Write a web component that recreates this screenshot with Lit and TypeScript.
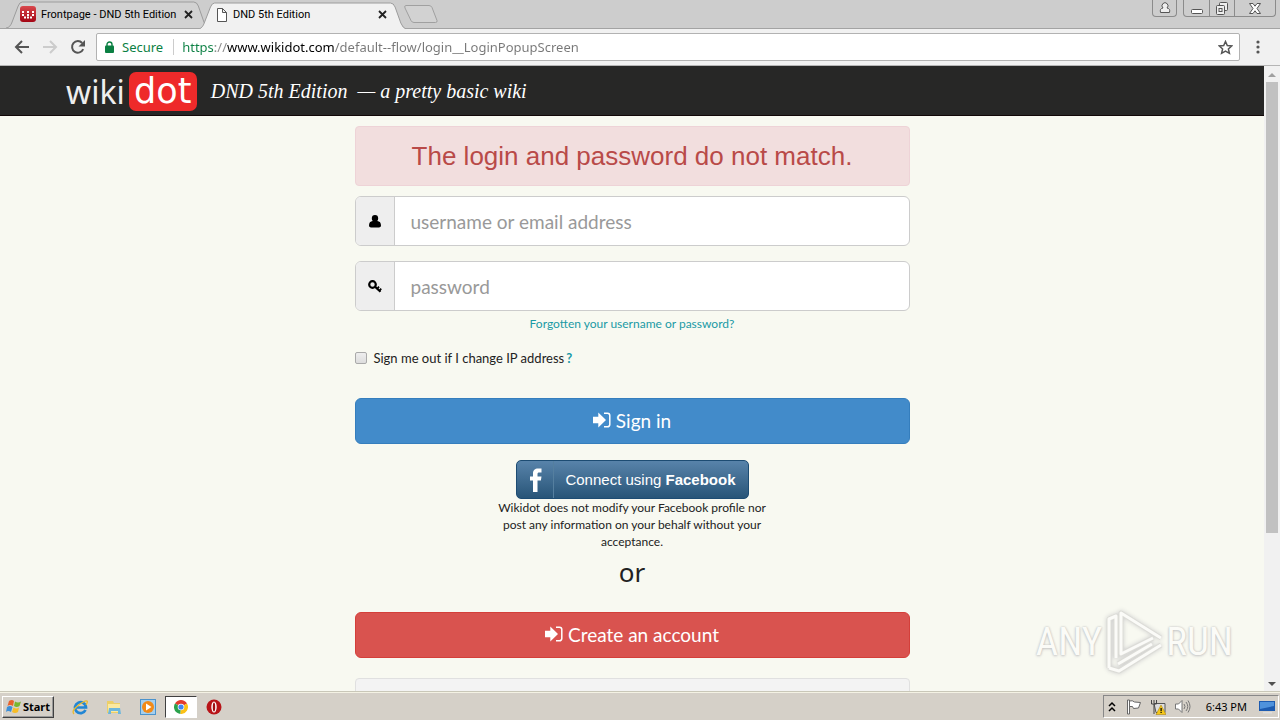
import { LitElement, html, css, svg } from "lit";
import { customElement } from "lit/decorators.js";

const backIcon = svg`<svg width="16" height="16" viewBox="0 0 16 16" fill="none" stroke="#555" stroke-width="2"><path d="M15 8H2M8 2 2 8l6 6"/></svg>`;
const forwardIcon = svg`<svg width="16" height="16" viewBox="0 0 16 16" fill="none" stroke="#ccc" stroke-width="2"><path d="M1 8h13M8 2l6 6-6 6"/></svg>`;
const reloadIcon = svg`<svg width="16" height="16" viewBox="0 0 16 16"><path d="M13.2 10.2A5.8 5.8 0 1 1 12.2 4" fill="none" stroke="#555" stroke-width="2"/><path d="M15 1v6.500H8.500z" fill="#555"/></svg>`;
const lockIcon = svg`<svg width="9" height="12" viewBox="0 0 9 12"><path d="M2 6V3.500a2.500 2.500 0 0 1 5 0V6" fill="none" stroke="#0b8043" stroke-width="1.400"/><rect y="4.500" width="9" height="7.500" rx="1" fill="#0b8043"/></svg>`;
const starIcon = svg`<svg width="15" height="15" viewBox="0 0 15 15" fill="none" stroke="#555" stroke-width="1.500"><path d="m7.500 1.500 1.800 4.100 4.400.4-3.300 2.900 1 4.400-3.900-2.300-3.900 2.300 1-4.400L1.300 6l4.400-.4z"/></svg>`;
const dotsIcon = svg`<svg width="4" height="14" viewBox="0 0 4 14" fill="#555"><circle cx="2" cy="2" r="1.600"/><circle cx="2" cy="7" r="1.600"/><circle cx="2" cy="12" r="1.600"/></svg>`;
const crossIcon = svg`<svg width="9" height="9" viewBox="0 0 9 9" stroke="#222" stroke-width="1.800"><path d="m1 1 7 7M8 1 1 8"/></svg>`;
const pageIcon = svg`<svg width="12" height="14" viewBox="0 0 12 14" fill="#fff" stroke="#555"><path d="M1.500.5h5l4 4v9h-9zM6.500.5v4h4"/></svg>`;
const wikiIcon = svg`<svg width="16" height="16" viewBox="0 0 16 16"><defs><linearGradient id="w" x2="0" y2="1"><stop stop-color="#d9484d"/><stop offset="1" stop-color="#a30514"/></linearGradient></defs><rect width="16" height="16" rx="3" fill="url(#w)"/><g fill="#fff"><path d="M2 5h2v2H2zM7 5h2v2H7zM12 5h2v2h-2zM2 8h2v2H2zM7 8h2v2H7zM12 8h2v2h-2zM4 10.500h2v2H4zM7 10.500h2v2H7zM10 10.500h2v2h-2z"/></g></svg>`;
const userIcon = svg`<svg width="12" height="13" viewBox="0 0 12 13"><path d="M6 0a3.300 3.300 0 0 1 3.200 3.300c0 1-.3 2-.9 2.700C10.800 6.300 12 7.700 12 10.500c0 1.300-.9 2-2 2H2c-1.100 0-2-.7-2-2C0 7.700 1.200 6.300 3.700 6a4 4 0 0 1-.9-2.700A3.300 3.300 0 0 1 6 0z"/></svg>`;
const keyIcon = svg`<svg width="14" height="13" viewBox="0 0 14 13" fill="none" stroke="#000"><circle cx="4.500" cy="4.500" r="3.300" stroke-width="2.200"/><path d="m6.800 6.500 5.700 5.300" stroke-width="2.200"/><path d="m9 9 2-2.300M11.200 11l2-2.300" stroke-width="1.800"/></svg>`;
const signIcon = svg`<svg width="18" height="16" viewBox="0 0 18 16" fill="#fff"><path d="M0 4.700h5.300V.5L13 8l-7.700 7.500v-4.200H0z"/><path d="M11 1.200h3.500a2.300 2.300 0 0 1 2.300 2.300v9a2.300 2.300 0 0 1-2.300 2.300H11" fill="none" stroke="#fff" stroke-width="1.500"/></svg>`;
const fbIcon = svg`<svg width="14" height="26" viewBox="0 0 14 26"><path d="M4 25V13.500H1V9.500h3V6.500C4 3 6 1.500 9 1.500h3.500v4H10c-1 0-1.500.5-1.500 1.500v2.500h4l-.6 4H8.500V25z" fill="#fff"/></svg>`;

const tabShape = (fill: string) => svg`<svg class="shape" viewBox="0 0 200 27" preserveAspectRatio="none"><path d="M0 27C3 27 5 24 6 21L12 5q1.500-4 4-4H185q3 0 4.500 4L195 21q2 5 5 6" fill="${fill}" stroke="#9c9c9c" vector-effect="non-scaling-stroke"/></svg>`;

@customElement("app-root")
export class AppRoot extends LitElement {
  static styles = css`
    :host { display: flex; flex-direction: column; height: 100vh; overflow: hidden; position: relative; background: #f8f9f1; font-family: Lato, Carlito, sans-serif; color: #222; }
    * { box-sizing: border-box; }
    svg { display: block; flex: none; }
    button { font: inherit; color: inherit; padding: 0; margin: 0; border: 0; background: none; display: flex; align-items: center; justify-content: center; }
    a { text-decoration: none; color: #1a9aa5; }

    .tabs { height: 29px; flex: none; display: flex; align-items: flex-end; padding-left: 6px; background: #cdcdcd; border-bottom: 1px solid #a3a3a3; font: 11px Roboto, sans-serif; color: #000; }
    .tab { position: relative; width: 203px; height: 28px; display: flex; align-items: center; padding: 0 16px 0 14px; }
    .tab.active { width: 208px; margin: 0 0 -1px -11px; padding: 0 19px 1px 18px; }
    .shape { position: absolute; inset: 1px 0 0 0; width: 100%; height: 27px; }
    .tab > button { position: relative; }
    .pick { flex: 1; min-width: 0; justify-content: flex-start; gap: 5px; white-space: nowrap; }
    .new { align-self: center; margin-left: -3px; }
    .spacer { flex: 1; }
    .win { display: flex; height: 17px; align-self: flex-start; border: 1px solid #8b8b8b; border-top: 0; border-radius: 0 0 4px 4px; }
    .win button { width: 25px; height: 16px; }
    .win button + button { border-left: 1px solid #8b8b8b; }
    .win .wide { width: 41px; }
    .win.account { margin-right: 6px; }
    .account button { width: 23px; }
    .win:last-child { margin-right: 4px; }

    .toolbar { height: 37px; flex: none; display: flex; align-items: center; padding: 0 20px 0 14px; gap: 12px; background: #f1f1f1; border-bottom: 1px solid #b5b5b5; }
    .omni { flex: 1; height: 28px; display: flex; align-items: center; margin: 0 4px 0 -2px; padding: 0 6px 0 8px; background: #fff; border: 1px solid #b2b2b2; border-radius: 2px; }
    .secure { color: #0b8043; margin: 0 10px 0 8px; font: 13px "Noto Sans", sans-serif; }
    .url { flex: 1; min-width: 0; border: 0; border-left: 1px solid #ccc; padding: 0 0 0 8px; outline: 0; height: 16px; font: 13px "Noto Sans", sans-serif; background: linear-gradient(90deg, #0b8043 41px, #888 41px 53px, #000 53px 160px, #777 160px); -webkit-background-clip: text; background-clip: text; -webkit-text-fill-color: transparent; }

    .body { flex: 1; min-height: 0; display: flex; }
    .page { flex: 1; min-width: 0; overflow: hidden; }
    .head { height: 50px; display: flex; align-items: center; padding: 1px 0 0 66px; background: #272726; border-bottom: 1px solid #120808; color: #fff; }
    .logo { display: flex; align-items: center; gap: 4px; font: 32px/39px "Noto Sans", sans-serif; color: #eee; }
    .dot { height: 39px; width: 68px; text-align: center; border-radius: 7px; background: #ee2a2a; color: #fff; font: 35px/39px "DejaVu Sans", sans-serif; }
    .title { margin-left: 14px; white-space: pre; font: italic 20px "Liberation Serif", serif; }

    .form { width: 555px; max-width: 100%; margin: 10px auto 0; display: flex; flex-direction: column; }
    .alert { height: 60px; display: flex; align-items: center; justify-content: center; background: #f2dede; border: 1px solid #eed3d7; border-radius: 4px; color: #b94a48; font: 26px "Liberation Sans", sans-serif; margin-bottom: 10px; }
    .field { display: flex; height: 50px; border: 1px solid #ccc; border-radius: 6px; background: #fff; overflow: hidden; margin-bottom: 15px; }
    .field.pw { margin-bottom: 4px; }
    .field label { width: 39px; display: flex; align-items: center; justify-content: center; background: #eee; border-right: 1px solid #ccc; }
    .field input { flex: 1; min-width: 0; border: 0; outline: 0; background: none; padding: 0 16px; font: 19px Lato, sans-serif; }
    .field input::placeholder { color: #999; }
    .forgot { text-align: center; font-size: 12px; line-height: 18px; margin-bottom: 16px; }
    .check { display: flex; align-items: center; height: 18px; font-size: 13px; margin-bottom: 31px; }
    .check input { appearance: none; width: 12px; height: 12px; margin: 0 7px 0 0; border: 1px solid #aaa; border-radius: 2px; background: linear-gradient(#eee, #ddd); }
    .check a { font-weight: bold; margin-left: 2px; }
    .btn { height: 46px; gap: 5px; padding-bottom: 2px; border: 1px solid #357ebd; border-radius: 6px; background: #428bca; color: #fff; font-size: 19px; }
    .btn.red { background: #d9534f; border-color: #d43f3a; }
    .fb { align-self: center; width: 233px; height: 39px; margin-top: 16px; border: 1px solid #1d4c73; border-radius: 5px; background: linear-gradient(#5883aa, #285578); color: #fff; font: 15px "Liberation Sans", sans-serif; }
    .fbmark { width: 37px; height: 37px; display: flex; align-items: center; justify-content: center; border-right: 1px solid #557f9f; padding-left: 2px; }
    .fbtext { flex: 1; }
    .note { align-self: center; width: 290px; margin: 0; text-align: center; font-size: 12px; line-height: 17px; }
    .or { text-align: center; font: 26px/30px "Noto Sans", sans-serif; margin: 7px 0 25px; }
    .panel { height: 60px; margin-top: 20px; background: #f3f3f3; border: 1px solid #e0e0e0; border-radius: 4px; }

    .scroll { width: 16px; background: #f1f1f1; display: flex; flex-direction: column; align-items: center; }
    .scroll svg { margin: 7px 0 6px; }
    .thumb { width: 12px; height: 72%; margin-top: -1px; background: #c1c1c1; }

    .task { height: 28px; flex: none; display: flex; align-items: center; background: #d5d0c8; border-top: 1px solid #f4f2e4; box-shadow: 0 -1px #c9c7b8; padding: 0 1px 0 2px; font: 11px "Noto Sans", sans-serif; color: #000; }
    .start { width: 52px; height: 22px; gap: 1px; font-weight: bold; border: 1px solid; border-color: #fff #404040 #404040 #fff; box-shadow: inset -1px -1px #999; }
    .quick { display: flex; margin-left: 9px; }
    .quick button { width: 34px; height: 22px; }
    .quick .on { width: 32px; background: #fff; border: 1px solid; border-color: #404040 #fff #fff #404040; }
    .tray { display: flex; align-items: center; gap: 8px; height: 23px; padding: 0 3px; border: 1px solid; border-color: #888 #fff #fff #888; }
    .clock { margin: 0 4px 0 7px; }

    .mark { position: absolute; right: 47px; bottom: 46px; display: flex; align-items: center; gap: 2px; font: 39px/64px "Liberation Sans Narrow", "Roboto Condensed", sans-serif; color: #fbfbf7; text-shadow: 0 0 2px #bbb, 0 1px 3px #ccc; pointer-events: none; }
    .mark svg { filter: drop-shadow(0 0 2px #ccc); }
  `;

  render() {
    return html`
      <nav class="tabs" aria-label="Tabs">
        <div class="tab">${tabShape("#d2d2d2")}<button class="pick">${wikiIcon}<span>Frontpage - DND 5th Edition</span></button><button aria-label="Close tab">${crossIcon}</button></div>
        <div class="tab active">${tabShape("#f1f1f1")}<button class="pick">${pageIcon}<span>DND 5th Edition</span></button><button aria-label="Close tab">${crossIcon}</button></div>
        <button class="new" aria-label="New tab"><svg width="36" height="18" viewBox="0 0 36 18"><path d="M3 .5h23q2 0 3 2l5 13q.5 2-1.500 2H11q-2 0-3-2L2 3Q1 .5 3 .5z" fill="#d2d2d2" stroke="#a0a0a0"/></svg></button>
        <span class="spacer"></span>
        <div class="win account"><button aria-label="Account"><svg width="12" height="12" viewBox="0 0 12 12" fill="#eee" stroke="#555"><path d="M1.500 10.500q-1-4 2.500-4.500a3 3 0 1 1 4 0q3.500.5 2.500 4.500z"/></svg></button></div>
        <div class="win">
          <button aria-label="Minimize"><svg width="12" height="12" viewBox="0 0 12 12"><rect x=".5" y="7.500" width="11" height="4" rx="1" fill="#fff" stroke="#555"/></svg></button>
          <button aria-label="Restore"><svg width="14" height="13" viewBox="0 0 14 13" fill="#eee" stroke="#555"><rect x="4.500" y=".5" width="8" height="8" rx="1"/><rect x="1.500" y="3.500" width="8" height="9" rx="1"/><rect x="4" y="6.500" width="3" height="3"/></svg></button>
          <button class="wide" aria-label="Close"><svg width="12" height="11" viewBox="0 0 12 11"><path d="M.5.500H4l2 2.700L8 .5h3.500L8 5.500l3.500 5H8L6 7.800l-2 2.700H.5l3.500-5z" fill="#fff" stroke="#555"/></svg></button>
        </div>
      </nav>
      <div class="toolbar">
        <button aria-label="Back">${backIcon}</button><button aria-label="Forward">${forwardIcon}</button><button aria-label="Reload">${reloadIcon}</button>
        <div class="omni">${lockIcon}<span class="secure">Secure</span>
          <input class="url" aria-label="Address" .value=${"https://www.wikidot.com/default--flow/login__LoginPopupScreen"} />
          <button aria-label="Bookmark">${starIcon}</button></div>
        <button aria-label="Menu">${dotsIcon}</button>
      </div>
      <div class="body">
        <main class="page">
          <header class="head"><div class="logo"><span>wiki</span><span class="dot">dot</span></div><span class="title">DND 5th Edition  — a pretty basic wiki</span></header>
          <form class="form">
            <div class="alert" role="alert">The login and password do not match.</div>
            <div class="field"><label for="user" aria-label="Username">${userIcon}</label><input id="user" placeholder="username or email address" /></div>
            <div class="field pw"><label for="pass" aria-label="Password">${keyIcon}</label><input id="pass" type="password" placeholder="password" /></div>
            <div class="forgot"><a href="#">Forgotten your username or password?</a></div>
            <div class="check"><input id="ip" type="checkbox" /><label for="ip">Sign me out if I change IP address</label><a href="#">?</a></div>
            <button class="btn" type="button">${signIcon}<span>Sign in</span></button>
            <button class="fb" type="button"><span class="fbmark">${fbIcon}</span><span class="fbtext">Connect using <b>Facebook</b></span></button>
            <p class="note">Wikidot does not modify your Facebook profile nor post any information on your behalf without your acceptance.</p>
            <div class="or">or</div>
            <button class="btn red" type="button">${signIcon}<span>Create an account</span></button>
            <div class="panel"></div>
          </form>
        </main>
        <div class="scroll"><svg width="8" height="4" viewBox="0 0 8 4"><path d="M0 4 4 0l4 4z" fill="#a0a0a0"/></svg><div class="thumb"></div><span class="spacer"></span><svg width="8" height="4" viewBox="0 0 8 4"><path d="m0 0 4 4 4-4z" fill="#505050"/></svg></div>
      </div>
      <footer class="task">
        <button class="start"><svg width="16" height="15" viewBox="0 0 16 15"><path d="M3 2q3-2 5 0L7 7Q4 5 1.500 7z" fill="#e8622c"/><path d="M9 2.500q3 2 6 0L13.500 7q-3 2-5.500 0z" fill="#79b62f"/><path d="M1 8q3-2 5.500 0L5 13q-3-2-5 0z" fill="#3d8fd8"/><path d="M7.500 8.500q3 2 5.500 0L12 13q-3 2-6 0z" fill="#f7bd27"/></svg>Start</button>
        <div class="quick">
          <button aria-label="Internet Explorer"><svg width="16" height="16" viewBox="0 0 16 16" fill="none"><path d="M13.500 11A5.500 5.500 0 1 1 14 8.500H4" stroke="#2286d4" stroke-width="2.700"/><path d="M2 15Q-1 12 6 6.500T15 2q1 1-1 4" stroke="#e9b92e" stroke-width="1.300"/></svg></button>
          <button aria-label="Explorer"><svg width="16" height="16" viewBox="0 0 16 16"><path d="M1 2h6l1 2h6v10H1z" fill="#eccf68"/><path d="M2 5h12v8H2z" fill="#fbe9a0"/><path d="M3 9h11l1 6h-3v-3H5v3H2z" fill="#6db7dc"/></svg></button>
          <button aria-label="Media Player"><svg width="16" height="16" viewBox="0 0 16 16"><rect x=".5" y=".5" width="15" height="15" fill="#a5cfee" stroke="#4b93cc"/><circle cx="8" cy="8" r="6" fill="#f28a18"/><path d="m6 4.500 5.500 3.500L6 11.500z" fill="#fff"/></svg></button>
          <button class="on" aria-label="Chrome"><svg width="14" height="14" viewBox="0 0 14 14"><path d="M7 7 1 3.400A7 7 0 0 1 13 3.500z" fill="#e33b2e"/><path d="M7 7 6.500 14A7 7 0 0 1 1 3.400z" fill="#2ba24c"/><path d="M7 7 13 3.500A7 7 0 0 1 6.500 14z" fill="#fbc116"/><circle cx="7" cy="7" r="3.300" fill="#fff"/><circle cx="7" cy="7" r="2.600" fill="#4285f4"/></svg></button>
          <button aria-label="Opera"><svg width="16" height="16" viewBox="0 0 16 16"><circle cx="8" cy="8" r="7.500" fill="#b81418"/><ellipse cx="8" cy="8" rx="2.700" ry="5.500" fill="#fff"/><ellipse cx="8" cy="8" rx="1.200" ry="4.500" fill="#a00f12"/></svg></button>
        </div>
        <span class="spacer"></span>
        <div class="tray">
          <svg width="10" height="12" viewBox="0 0 10 12" fill="none" stroke="#000" stroke-width="1.500"><path d="m2 5 3-3 3 3M2 10l3-3 3 3"/></svg>
          <svg width="17" height="16" viewBox="0 0 17 16" fill="#fff" stroke="#666"><path d="M2.500 1h2v14h-2zM4.500 2q3-1 5 1l6 .5-2 5.500-5 .5-1-2h-3z"/></svg>
          <svg width="16" height="16" viewBox="0 0 16 16"><path d="M4 4.500h11v9H6z" fill="#ddd" stroke="#555"/><path d="M1.500 1v4h5V1M4 5v10M4 1v3" fill="none" stroke="#444"/><path d="m11 6 5 9.500H6z" fill="#f6c818" stroke="#a57b00" stroke-width=".5"/><path d="M10.500 9h1.200v3h-1.200zm0 3.800h1.200V14h-1.200z"/></svg>
          <svg width="17" height="15" viewBox="0 0 17 15" fill="none" stroke="#777"><path d="M1.500 5h3L8 1.500v12L4.500 10h-3z" fill="#fff"/><path d="M10 5q2 2.500 0 5M12 3q3.500 4.500 0 9M14 1.500q4 6 0 12"/></svg>
          <span class="clock">6:43 PM</span>
          <svg width="16" height="14" viewBox="0 0 16 14"><path d="M0 1h16v10H0z" fill="#1d5bb0"/><path d="M1 2h14v4L1 9z" fill="#4f92dc"/><path d="M4 12h9v1.500H4z" fill="#ddd"/></svg>
        </div>
      </footer>
      <div class="mark" aria-hidden="true"><span>ANY</span><svg width="60" height="64" viewBox="0 0 60 64" fill="none" stroke-linejoin="round"><g stroke="#dcdcd7" stroke-width="5"><path d="M17 44V3l40 25M17 14v30l32-16M5 58V9l7-3v42M5 58l10 3 42-26M14 54l34-20"/></g><g stroke="#fbfbf8" stroke-width="3"><path d="M17 44V3l40 25M17 14v30l32-16M5 58V9l7-3v42M5 58l10 3 42-26M14 54l34-20"/></g></svg><span>RUN</span></div>
    `;
  }
}
